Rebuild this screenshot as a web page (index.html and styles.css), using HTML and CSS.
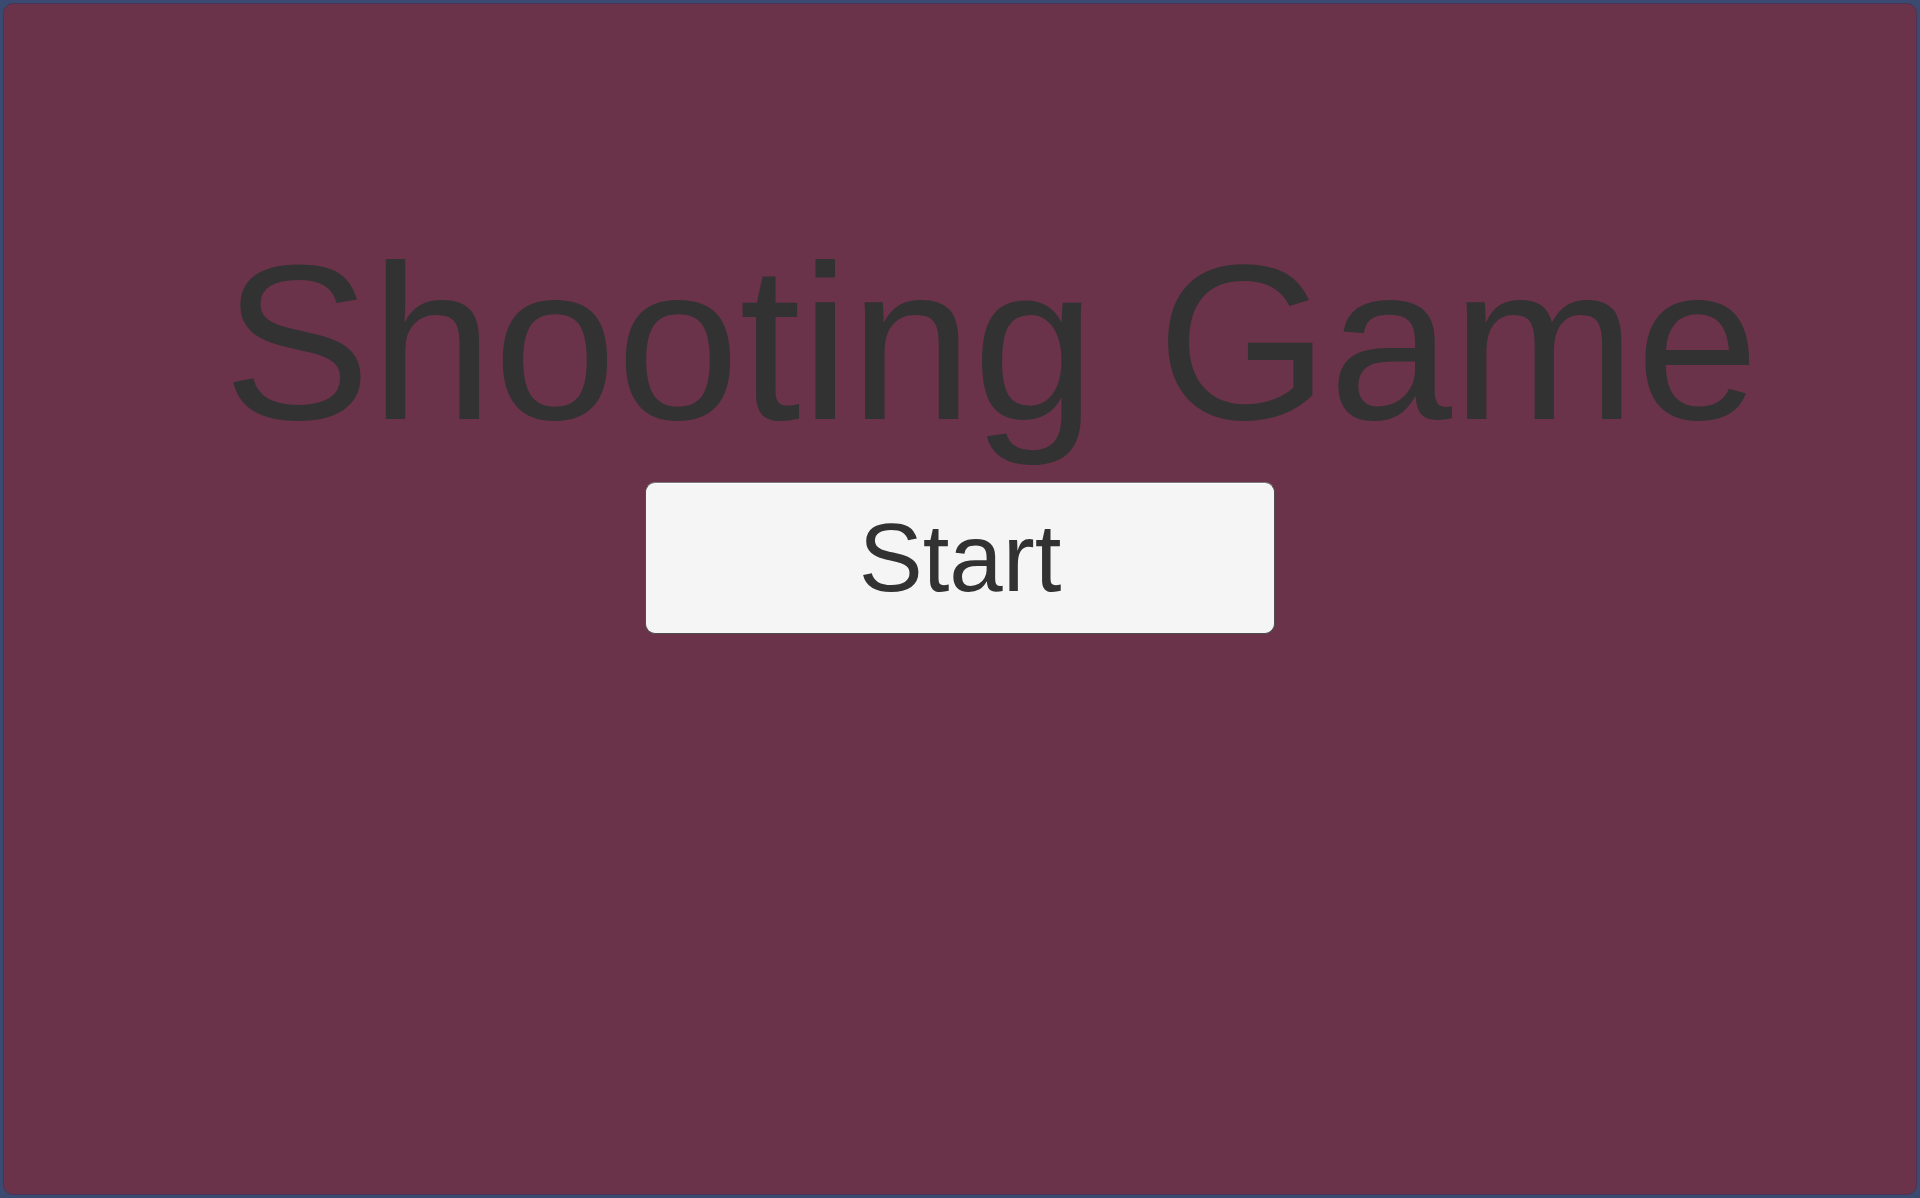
FILE: index.html
```html
<!DOCTYPE html>
<html lang="en">
<head>
<meta charset="utf-8">
<title>Shooting Game</title>
<link rel="stylesheet" href="styles.css">
</head>
<body>
<main class="panel">
  <h1 class="title">Shooting Game</h1>
  <button class="start-btn" type="button"><span class="start-label">Start</span></button>
</main>
</body>
</html>
```
FILE: styles.css
```css
html, body {
  margin: 0;
  padding: 0;
}
body {
  width: 1920px;
  height: 1198px;
  background: #3b4a70;
  box-sizing: border-box;
  padding: 3px;
  overflow: hidden;
  font-family: "Liberation Sans", Arial, sans-serif;
}
.panel {
  box-sizing: border-box;
  height: 1192px;
  background: #6a3349;
  border: 1px solid #4a3556;
  border-radius: 10px;
  display: flex;
  flex-direction: column;
  align-items: center;
  padding-top: 231px;
}
.title {
  margin: 0;
  font-size: 221px;
  line-height: 216px;
  font-weight: normal;
  color: #323232;
  padding-left: 62px;
  white-space: nowrap;
}
.start-btn {
  margin-top: 31px;
  width: 630px;
  height: 152px;
  box-sizing: border-box;
  background: #f5f5f5;
  border: 1px solid #4e4e4e;
  border-top-color: #7a7a7a;
  border-radius: 10px;
  box-shadow: inset 0 1px 0 #ffffff;
  display: flex;
  align-items: center;
  justify-content: center;
  padding: 0;
  font-family: "Liberation Sans", Arial, sans-serif;
  cursor: pointer;
}
.start-label {
  font-size: 96px;
  line-height: 96px;
  color: #323232;
}
```
